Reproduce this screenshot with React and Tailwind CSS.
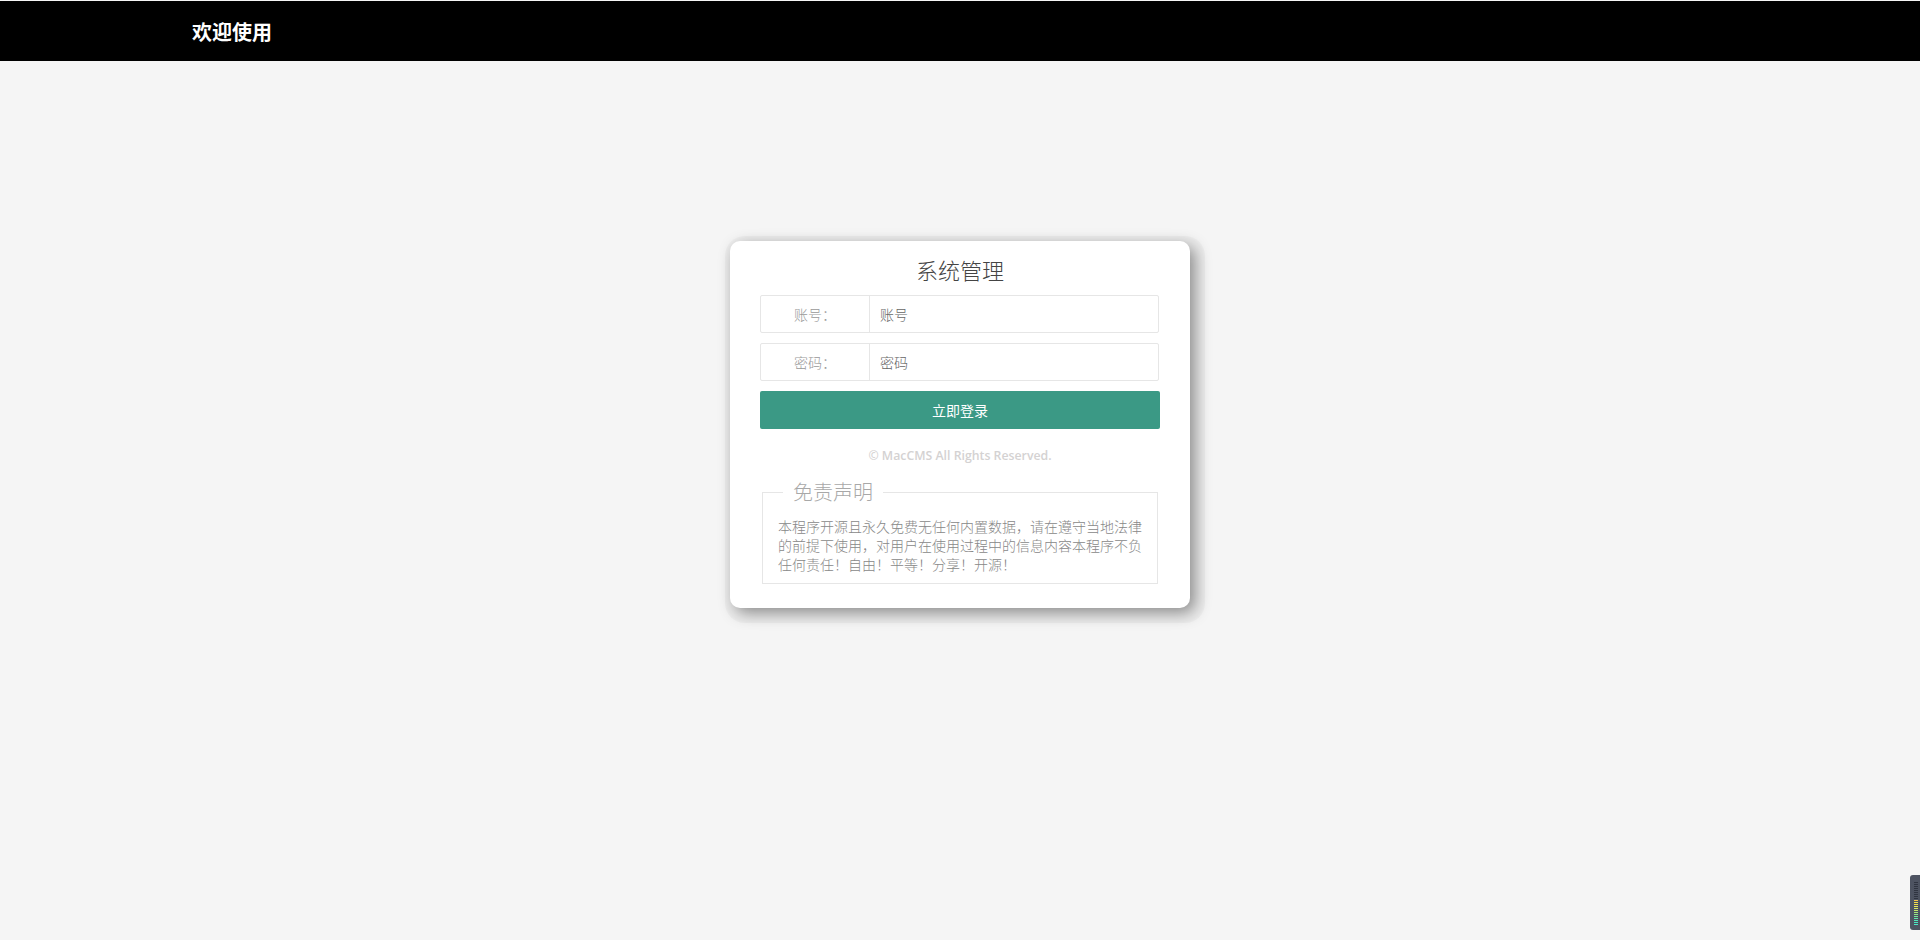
const levels = [
  'bg-[#2f3440]', 'bg-[#2f3440]', 'bg-[#2f3440]', 'bg-[#2f3440]', 'bg-[#2f3440]', 'bg-[#2f3440]', 'bg-[#2f3440]', 'bg-[#2f3440]', 'bg-[#2f3440]',
  'bg-[#f5c84a]', 'bg-[#f2e14c]', 'bg-[#f2e14c]', 'bg-[#e6ea5c]', 'bg-[#d6ea62]', 'bg-[#c2e86a]', 'bg-[#a8e878]', 'bg-[#8fe888]', 'bg-[#78e898]', 'bg-[#62e8a8]', 'bg-[#52e8b8]', 'bg-[#4ae8c4]', 'bg-[#4ae8c4]',
];

function LoginRow({ label, placeholder }) {
  return (
    <div className="flex h-[38px] w-[399px] rounded-[2px] border border-[#e6e6e6] bg-white">
      <label className="flex w-[109px] items-center justify-center border-r border-[#e6e6e6] text-[14px] font-light text-[#999]">{label}</label>
      <div className="flex flex-1 items-center pl-[10px] text-[14px] font-light text-[#666]">{placeholder}</div>
    </div>
  );
}

export default function App() {
  return (
    <div className="relative h-[940px] overflow-hidden bg-[#f5f5f5] font-['Noto_Sans_CJK_SC','Noto_Sans',sans-serif]">
      {/* Header */}
      <header className="mt-px flex h-[60px] items-center bg-black pl-[192px]">
        <h1 className="pt-[2px] text-[20px] font-bold text-white">欢迎使用</h1>
      </header>

      {/* Login card */}
      <main className="mx-auto mt-[180px] h-[367px] w-[460px] rounded-[10px] bg-white px-[30px] shadow-[5px_5px_16px_rgba(0,0,0,0.42),5px_5px_1px_10px_rgba(0,0,0,0.03)]">
        <h2 className="flex h-[54px] items-center justify-center pt-[2px] text-[22px] font-light text-[#444]">系统管理</h2>
        <div className="flex flex-col gap-[10px]">
          <LoginRow label="账号：" placeholder="账号" />
          <LoginRow label="密码：" placeholder="密码" />
          <button className="h-[38px] w-[400px] rounded-[2px] bg-[#3b9985] text-[14px] text-white">立即登录</button>
        </div>
        <p className="mt-[18px] text-center font-['Open_Sans',sans-serif] text-[12.3px] font-semibold text-[#d4d2d2]">© MacCMS All Rights Reserved.</p>
        <fieldset className="mx-[2px] mt-[15px] h-[104px] w-[396px] border border-[#e6e6e6] px-[15px] pt-[13px]">
          <legend className="ml-[5px] px-[10px] text-[20px] font-light leading-[24px] text-[#a8a8a8]">免责声明</legend>
          <p className="text-[14px] font-light leading-[19px] text-[#888]">本程序开源且永久免费无任何内置数据，请在遵守当地法律的前提下使用，对用户在使用过程中的信息内容本程序不负任何责任！自由！平等！分享！开源！</p>
        </fieldset>
      </main>

      {/* Floating level widget */}
      <div className="absolute bottom-[10px] right-0 flex h-[55px] w-[10px] flex-col items-end gap-px rounded-l-[3px] bg-[#4d5361] pr-[2px] pt-[7px]">
        {levels.map((c, i) => (
          <div key={i} className={`h-px w-[4px] ${c}`} />
        ))}
      </div>
    </div>
  );
}
